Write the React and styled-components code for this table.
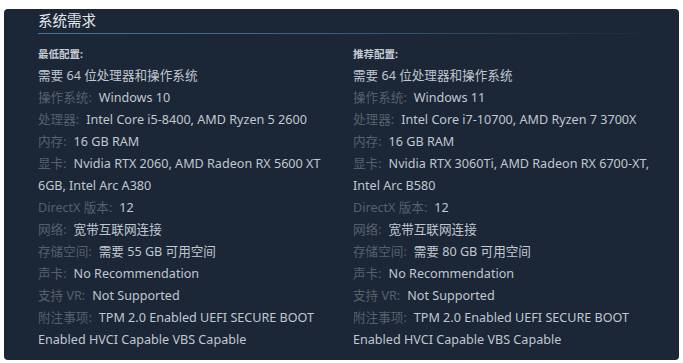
import React from 'react'
import styled, { createGlobalStyle } from 'styled-components'

const GlobalStyle = createGlobalStyle`
  * {
    margin: 0;
    padding: 0;
    box-sizing: border-box;
  }
  body {
    background-color: #ffffff;
    font-family: "Noto Sans", "Noto Sans CJK SC", sans-serif;
  }
`

const Panel = styled.section`
  margin: 9px 4px 4px 4px;
  background-color: #1b2636;
  border-radius: 4px;
  padding: 1px 16px 9px 34px;
`

const Title = styled.h2`
  font-size: 14.5px;
  font-weight: 400;
  line-height: 20px;
  color: #e4e8ec;
  padding-bottom: 3px;
  border-bottom: 1px solid;
  border-image: linear-gradient(to right, #44739a 0%, #3a6384 45%, rgba(27, 38, 54, 0) 100%) 1;
`

const Columns = styled.div`
  display: grid;
  grid-template-columns: 300px 1fr;
  column-gap: 15px;
  margin-top: 12px;
`

const Column = styled.div`
  display: flex;
  flex-direction: column;
`

const Heading = styled.div`
  font-size: 10.5px;
  font-weight: 700;
  line-height: 16px;
  color: #c5ccd3;
  margin-bottom: 3px;
`

const Row = styled.div`
  font-size: 12.6px;
  line-height: 22px;
  color: #c0c8d0;
`

const Label = styled.span`
  color: #54616d;
  margin-right: 7px;
`

const minimum = [
  [null, ['需要 64 位处理器和操作系统']],
  ['操作系统:', ['Windows 10']],
  ['处理器:', ['Intel Core i5-8400, AMD Ryzen 5 2600']],
  ['内存:', ['16 GB RAM']],
  ['显卡:', ['Nvidia RTX 2060, AMD Radeon RX 5600 XT', '6GB, Intel Arc A380']],
  ['DirectX 版本:', ['12']],
  ['网络:', ['宽带互联网连接']],
  ['存储空间:', ['需要 55 GB 可用空间']],
  ['声卡:', ['No Recommendation']],
  ['支持 VR:', ['Not Supported']],
  ['附注事项:', ['TPM 2.0 Enabled UEFI SECURE BOOT', 'Enabled HVCI Capable VBS Capable']],
]

const recommended = [
  [null, ['需要 64 位处理器和操作系统']],
  ['操作系统:', ['Windows 11']],
  ['处理器:', ['Intel Core i7-10700, AMD Ryzen 7 3700X']],
  ['内存:', ['16 GB RAM']],
  ['显卡:', ['Nvidia RTX 3060Ti, AMD Radeon RX 6700-XT,', 'Intel Arc B580']],
  ['DirectX 版本:', ['12']],
  ['网络:', ['宽带互联网连接']],
  ['存储空间:', ['需要 80 GB 可用空间']],
  ['声卡:', ['No Recommendation']],
  ['支持 VR:', ['Not Supported']],
  ['附注事项:', ['TPM 2.0 Enabled UEFI SECURE BOOT', 'Enabled HVCI Capable VBS Capable']],
]

function Specs({ heading, rows }) {
  return (
    <Column>
      <Heading>{heading}</Heading>
      {rows.map(([label, lines], i) => (
        <Row key={i}>
          {label && <Label>{label}</Label>}
          {lines.map((line, j) => (
            <React.Fragment key={j}>
              {j > 0 && <br />}
              <span>{line}</span>
            </React.Fragment>
          ))}
        </Row>
      ))}
    </Column>
  )
}

export default function App() {
  return (
    <Panel>
      <GlobalStyle />
      <Title>系统需求</Title>
      <Columns>
        <Specs heading="最低配置:" rows={minimum} />
        <Specs heading="推荐配置:" rows={recommended} />
      </Columns>
    </Panel>
  )
}
